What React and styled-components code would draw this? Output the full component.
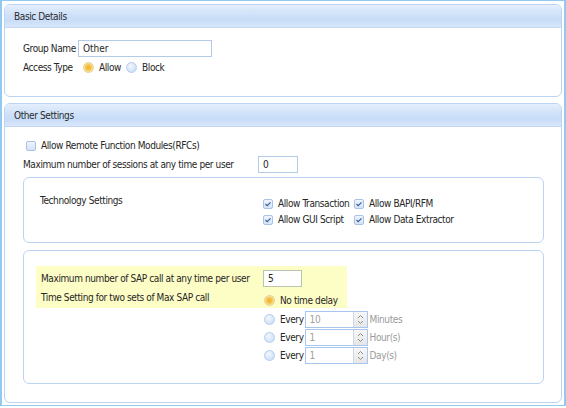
import React from "react";
import styled, { createGlobalStyle } from "styled-components";

const Global = createGlobalStyle`
  html, body { margin: 0; padding: 0; background: #fff; }
  body {
    font-family: "DejaVu Sans Condensed", "Liberation Sans", Arial, sans-serif;
    font-size: 10px;
    letter-spacing: -0.4px;
    color: #262626;
  }
  * { box-sizing: border-box; }
`;

const Frame = styled.div`
  width: 566px;
  height: 406px;
  border: 1px solid #92c9f0;
  border-left-width: 2px;
  border-right-width: 2px;
  padding: 3px 2px 0 2px;
  display: flex;
  flex-direction: column;
  gap: 6px;
`;

const Panel = styled.section`
  border: 1px solid #bcd3f1;
  border-radius: 6px;
  background: #fff;
  height: ${(p) => p.$h}px;
  display: flex;
  flex-direction: column;
  overflow: hidden;
`;

const PanelHeader = styled.div`
  height: 23px;
  flex: none;
  display: flex;
  align-items: center;
  padding-left: 9px;
  color: #2b2b2b;
  background: linear-gradient(#e4eefc 0%, #cfe1f9 45%, #c8ddf8 70%, #d9e7fb 100%);
  border-bottom: 1px solid #c2d7f3;
`;

const PanelBody = styled.div`
  flex: 1;
  padding: ${(p) => p.$pad};
  display: flex;
  flex-direction: column;
`;

const FormGrid = styled.div`
  display: grid;
  grid-template-columns: ${(p) => p.$cols};
  row-gap: ${(p) => p.$gap}px;
  align-items: center;
  padding-left: ${(p) => p.$pl || 0}px;
  margin-top: ${(p) => p.$mt || 0}px;
`;

const Label = styled.span`
  white-space: nowrap;
  color: ${(p) => (p.$muted ? "#9a9a9a" : "#262626")};
`;

const TextInput = styled.input`
  width: ${(p) => p.$w}px;
  height: 17px;
  border: 1px solid ${(p) => p.$border || "#b3cbe9"};
  padding: 0 4px;
  font: inherit;
  color: #262626;
  background: #fff;
  outline: none;
`;

const Row = styled.div`
  display: flex;
  align-items: center;
  gap: ${(p) => p.$gap ?? 4}px;
  padding-left: ${(p) => p.$pl || 0}px;
`;

const RadioDot = styled.span`
  width: 11px;
  height: 11px;
  border-radius: 50%;
  flex: none;
  border: 1px solid ${(p) => (p.$on ? "#e8cf8c" : "#b4cdee")};
  background: ${(p) =>
    p.$on
      ? "radial-gradient(circle at 50% 50%, #f0b52c 0, #f3c04a 2.5px, #f9dc8e 4px, #fcecc2 5px)"
      : "radial-gradient(circle at 40% 35%, #f2f7fe 0, #d6e5f9 60%, #c4d8f4 100%)"};
`;

const Radio = ({ on, children, gap = 5 }) => (
  <Row $gap={gap}>
    <RadioDot $on={on} />
    {children && <Label>{children}</Label>}
  </Row>
);

const Box = styled.span`
  width: 10px;
  height: 10px;
  flex: none;
  border: 1px solid #a9c3e6;
  border-radius: 2px;
  background: linear-gradient(#eef4fd, #d5e3f7);
  display: flex;
  align-items: center;
  justify-content: center;
`;

const Check = ({ on, children, gap = 5 }) => (
  <Row $gap={gap}>
    <Box>
      {on && (
        <svg width="8" height="8" viewBox="0 0 8 8">
          <path d="M1.5 4 L3.2 5.7 L6.5 2.3" fill="none" stroke="#3a5f96" strokeWidth="1.2" />
        </svg>
      )}
    </Box>
    <Label>{children}</Label>
  </Row>
);

const SubBox = styled.div`
  border: 1px solid #bcd3f1;
  border-radius: 6px;
  margin: ${(p) => p.$m};
  height: ${(p) => p.$h}px;
  padding: ${(p) => p.$pad};
`;

const TechBox = styled(SubBox)`
  display: grid;
  grid-template-columns: 223px auto;
  align-items: start;
  align-content: start;
`;

const SapBox = styled(SubBox)`
  display: flex;
  flex-direction: column;
`;

const TechGrid = styled.div`
  display: grid;
  grid-template-columns: 91px auto;
  row-gap: 5px;
  padding-top: 3px;
`;

const Highlight = styled.div`
  width: 311px;
  background: #fdfdc6;
  padding: 4px 0 2px 5px;
  display: grid;
  grid-template-columns: 222px auto;
  row-gap: 4px;
`;

const HiCell = styled.div`
  display: flex;
  align-items: ${(p) => p.$align || "center"};
  padding-top: ${(p) => p.$pt || 0}px;
  padding-left: ${(p) => p.$pl || 0}px;
`;

const Options = styled.div`
  padding-left: 228px;
  padding-top: 3px;
  display: flex;
  flex-direction: column;
  gap: 1px;
`;

const Spinner = styled.div`
  width: 63px;
  height: 17px;
  margin-left: 1px;
  margin-right: 2px;
  border: 1px solid #a9c7ec;
  display: flex;
  background: #fff;
`;

const SpinValue = styled.span`
  flex: 1;
  padding-left: 4px;
  color: #a0a0a0;
  line-height: 15px;
`;

const SpinButtons = styled.span`
  width: 14px;
  border-left: 1px solid #d0d8e2;
  background: linear-gradient(#f7f7f7, #e6e6e6);
  display: flex;
  align-items: center;
  justify-content: center;
`;

const SpinIcon = () => (
  <svg width="9" height="13" viewBox="0 0 9 13">
    <path d="M2 5 L4.5 2.5 L7 5" fill="none" stroke="#8c8c8c" strokeWidth="1" />
    <path d="M2 8 L4.5 10.5 L7 8" fill="none" stroke="#8c8c8c" strokeWidth="1" />
  </svg>
);

const EveryRow = ({ value, unit }) => (
  <Row $gap={0}>
    <RadioDot />
    <Label style={{ marginLeft: 5 }}>Every</Label>
    <Spinner>
      <SpinValue>{value}</SpinValue>
      <SpinButtons>
        <SpinIcon />
      </SpinButtons>
    </Spinner>
    <Label $muted>{unit}</Label>
  </Row>
);

export default function App() {
  return (
    <>
      <Global />
      <Frame>
        <Panel $h={93}>
          <PanelHeader>Basic Details</PanelHeader>
          <PanelBody $pad="12px 18px">
            <FormGrid $cols="55px auto" $gap={5}>
              <Label>Group Name</Label>
              <TextInput $w={134} defaultValue="Other" />
              <Label>Access Type</Label>
              <Row $gap={5} $pl={5}>
                <Radio on>Allow</Radio>
                <Radio>Block</Radio>
              </Row>
            </FormGrid>
          </PanelBody>
        </Panel>
        <Panel $h={300}>
          <PanelHeader>Other Settings</PanelHeader>
          <PanelBody $pad="13px 0 0 0">
            <Row $pl={21}>
              <Check>Allow Remote Function Modules(RFCs)</Check>
            </Row>
            <FormGrid $cols="235px auto" $gap={0} $pl={18} $mt={5}>
              <Label>Maximum number of sessions at any time per user</Label>
              <TextInput $w={40} defaultValue="0" />
            </FormGrid>
            <TechBox $m="4px 17px 0 18px" $h={66} $pad="17px 0 0 16px">
              <Label>Technology Settings</Label>
              <TechGrid>
                <Check on>Allow Transaction</Check>
                <Check on>Allow BAPI/RFM</Check>
                <Check on>Allow GUI Script</Check>
                <Check on>Allow Data Extractor</Check>
              </TechGrid>
            </TechBox>
            <SapBox $m="7px 17px 0 18px" $h={134} $pad="15px 0 0 12px">
              <Highlight>
                <HiCell>
                  <Label>Maximum number of SAP call at any time per user</Label>
                </HiCell>
                <HiCell>
                  <TextInput $w={39} $border="#b9c6ad" defaultValue="5" />
                </HiCell>
                <HiCell $align="flex-start" $pt={1}>
                  <Label>Time Setting for two sets of Max SAP call</Label>
                </HiCell>
                <HiCell $pt={4} $pl={1}>
                  <Radio on>No time delay</Radio>
                </HiCell>
              </Highlight>
              <Options>
                <EveryRow value="10" unit="Minutes" />
                <EveryRow value="1" unit="Hour(s)" />
                <EveryRow value="1" unit="Day(s)" />
              </Options>
            </SapBox>
          </PanelBody>
        </Panel>
      </Frame>
    </>
  );
}
